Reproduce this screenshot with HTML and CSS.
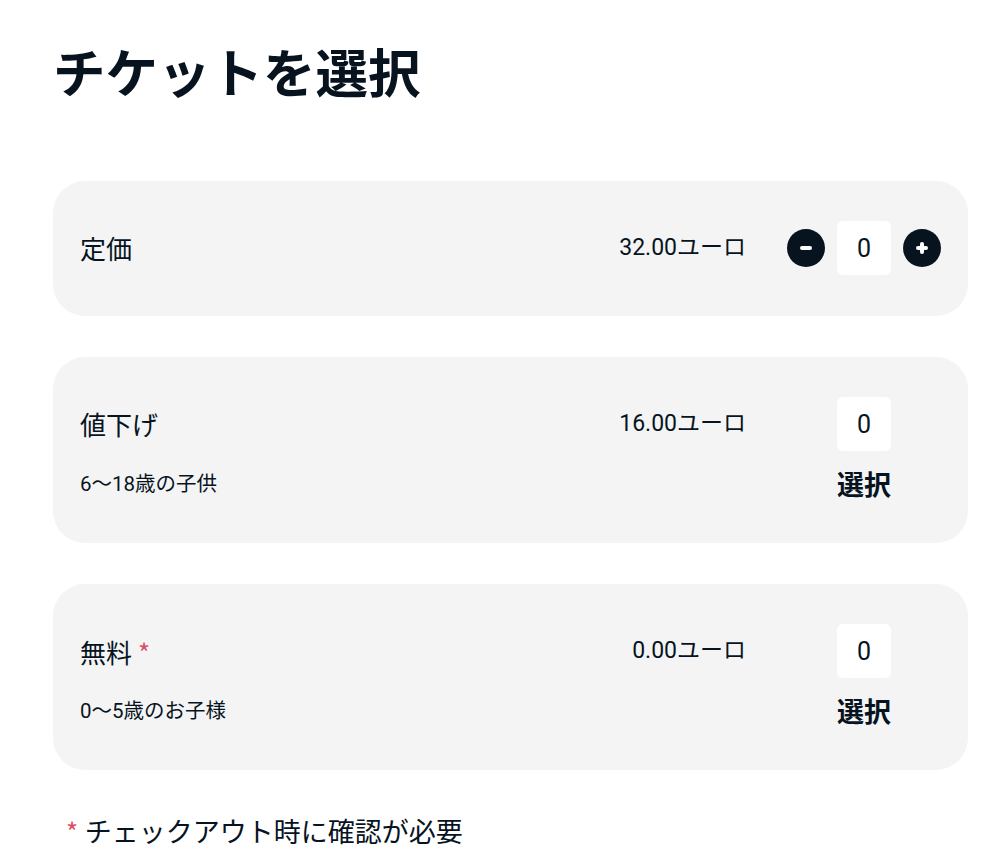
FILE: index.html
```html
<!DOCTYPE html>
<html lang="ja">
<head>
<meta charset="utf-8">
<title>チケットを選択</title>
<link rel="stylesheet" href="styles.css">
</head>
<body>
<main class="page">
  <h1 class="title">チケットを選択</h1>

  <section class="ticket">
    <div class="ticket-label">定価</div>
    <div class="ticket-price">32.00ユーロ</div>
    <div class="qty">
      <button class="qty-btn" aria-label="減らす">
        <svg width="12" height="12" viewBox="0 0 12 12"><rect x="0" y="4" width="12" height="4" rx="2" fill="#fff"/></svg>
      </button>
      <div class="qty-input">0</div>
      <button class="qty-btn" aria-label="増やす">
        <svg width="12" height="12" viewBox="0 0 12 12"><rect x="0" y="4" width="12" height="4" rx="2" fill="#fff"/><rect x="4" y="0" width="4" height="12" rx="2" fill="#fff"/></svg>
      </button>
    </div>
  </section>

  <section class="ticket">
    <div class="ticket-label">値下げ</div>
    <div class="ticket-price">16.00ユーロ</div>
    <div class="qty">
      <div class="qty-input">0</div>
    </div>
    <div class="ticket-sub">6〜18歳の子供</div>
    <div class="ticket-select">選択</div>
  </section>

  <section class="ticket">
    <div class="ticket-label">無料<span class="req">*</span></div>
    <div class="ticket-price">0.00ユーロ</div>
    <div class="qty">
      <div class="qty-input">0</div>
    </div>
    <div class="ticket-sub">0〜5歳のお子様</div>
    <div class="ticket-select">選択</div>
  </section>

  <p class="note"><span class="req">*</span> チェックアウト時に確認が必要</p>
</main>
</body>
</html>
```

FILE: styles.css
```css
* {
  box-sizing: border-box;
}

body {
  margin: 0;
  background: #ffffff;
  color: #07141f;
  font-family: Roboto, "Noto Sans CJK JP", sans-serif;
}

.page {
  padding: 44px 30px 0 53px;
}

.title {
  margin: 0 0 75px 0;
  font-size: 52.5px;
  line-height: 62px;
  font-weight: 700;
  letter-spacing: 0;
}

.ticket {
  display: grid;
  grid-template-columns: 1fr auto 154px;
  column-gap: 41px;
  row-gap: 15px;
  align-items: center;
  background: #f4f4f4;
  border-radius: 32px;
  padding: 40px 27px 41px 27px;
  margin-bottom: 41px;
}

.ticket-label {
  font-size: 26px;
  line-height: 36px;
  padding-top: 4px;
}

.req {
  color: #d94f63;
  margin-left: 6px;
  font-family: "Noto Sans CJK JP", sans-serif;
}

.ticket-price {
  font-size: 23px;
  line-height: 32px;
  text-align: right;
}

.qty {
  display: flex;
  align-items: center;
  justify-content: center;
  gap: 12px;
}

.qty-btn {
  width: 38px;
  height: 38px;
  border-radius: 50%;
  border: none;
  background: #07141f;
  padding: 0;
  display: flex;
  align-items: center;
  justify-content: center;
}

.qty-input {
  width: 54px;
  height: 54px;
  background: #ffffff;
  border-radius: 6px;
  display: flex;
  align-items: center;
  justify-content: center;
  font-size: 25px;
}

.ticket-sub {
  grid-column: 1 / 3;
  font-size: 20.5px;
  line-height: 36px;
}

.ticket-select {
  grid-column: 3;
  text-align: center;
  font-family: "Noto Sans CJK JP", sans-serif;
  font-weight: 700;
  font-size: 27px;
  line-height: 36px;
}

.note {
  margin: 0;
  padding-left: 13px;
  font-size: 27px;
  line-height: 39px;
}

.note .req {
  margin-left: 0;
  font-size: 26px;
}
```
